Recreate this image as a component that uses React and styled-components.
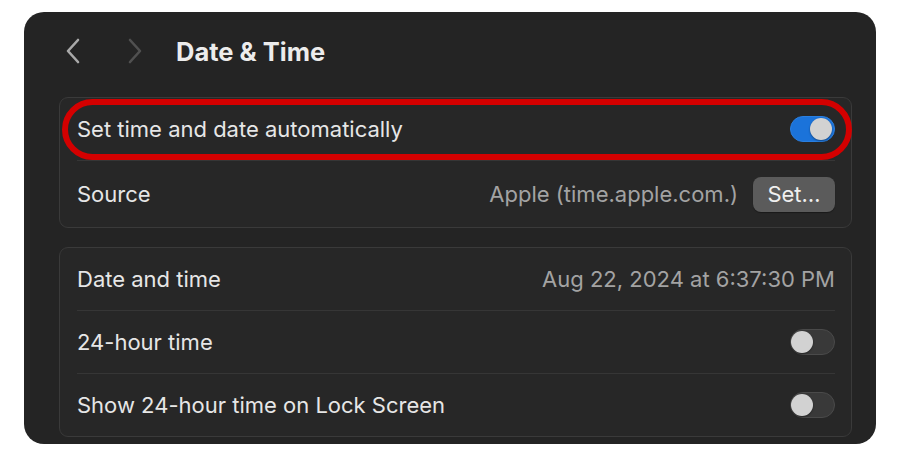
import React from "react";
import styled, { createGlobalStyle } from "styled-components";

const GlobalStyle = createGlobalStyle`
  html, body {
    margin: 0;
    padding: 0;
    background: #ffffff;
  }

  body {
    font-family: Inter, "Noto Sans", "Liberation Sans", sans-serif;
  }
`;

function Chevron({ dir, dim }) {
  return (
    <svg width="16" height="26" viewBox="0 0 16 26" fill="none">
      <path
        d={dir === "left" ? "M13 2 L3 13 L13 24" : "M3 2 L13 13 L3 24"}
        stroke={dim ? "#505050" : "#a9a9a9"}
        strokeWidth="2.6"
        strokeLinecap="round"
        strokeLinejoin="round"
      />
    </svg>
  );
}

function App() {
  return (
    <>
      <GlobalStyle />
      <Page>
        <Window>
          <Header>
            <NavBtn>
              <Chevron dir="left" />
            </NavBtn>
            <NavBtn>
              <Chevron dir="right" dim />
            </NavBtn>
            <Title>Date &amp; Time</Title>
          </Header>

          <Group>
            <Row>
              <Label>Set time and date automatically</Label>
              <Toggle $on />
              <Highlight />
            </Row>
            <Divider />
            <Row $tall>
              <Label>Source</Label>
              <Trailing>
                <Value>Apple (time.apple.com.)</Value>
                <SetBtn>Set…</SetBtn>
              </Trailing>
            </Row>
          </Group>

          <Group>
            <Row>
              <Label>Date and time</Label>
              <Value>Aug 22, 2024 at 6:37:30 PM</Value>
            </Row>
            <Divider />
            <Row>
              <Label>24-hour time</Label>
              <Toggle />
            </Row>
            <Divider />
            <Row>
              <Label>Show 24-hour time on Lock Screen</Label>
              <Toggle />
            </Row>
          </Group>
        </Window>
      </Page>
    </>
  );
}

const Page = styled.div`
  width: 900px;
  height: 456px;
  padding: 12px 24px;
  box-sizing: border-box;
  background: #ffffff;
`;

const Window = styled.div`
  height: 432px;
  box-sizing: border-box;
  background: #242424;
  border-radius: 20px;
  padding: 0 24px 0 35px;
  display: flex;
  flex-direction: column;
  gap: 19px;
  overflow: hidden;
`;

const Header = styled.div`
  display: flex;
  align-items: center;
  height: 66px;
  box-sizing: border-box;
  padding: 12px 0 0 6px;
`;

const NavBtn = styled.div`
  display: flex;
  align-items: center;
  justify-content: center;
  width: 16px;
  height: 26px;
  margin-right: 46px;

  &:nth-child(2) {
    margin-right: 33px;
  }
`;

const Title = styled.h1`
  margin: 0;
  font-size: 25.5px;
  font-weight: 700;
  color: #ececec;
  letter-spacing: 0;
`;

const Group = styled.div`
  display: flex;
  flex-direction: column;
  background: #272727;
  border: 1px solid #3a3a3a;
  border-radius: 9px;
`;

const Row = styled.div`
  position: relative;
  display: flex;
  align-items: center;
  justify-content: space-between;
  min-height: ${({ $tall }) => ($tall ? "66px" : "62px")};
  padding: 0 16px 0 17px;
`;

const Divider = styled.div`
  height: 1px;
  margin: 0 16px 0 17px;
  background: #363636;
`;

const Label = styled.span`
  font-size: 22px;
  color: #e6e6e6;
`;

const Value = styled.span`
  font-size: 22px;
  color: #a3a3a3;
`;

const Trailing = styled.div`
  display: flex;
  align-items: center;
  gap: 15px;
`;

const SetBtn = styled.button`
  height: 35px;
  width: 82px;
  border: 0;
  border-radius: 8px;
  background: #5b5b5b;
  color: #f0f0f0;
  font-family: inherit;
  font-size: 22px;
  padding: 0;
  box-shadow: 0 1px 1px rgba(0, 0, 0, 0.35);
`;

const Toggle = styled.div`
  position: relative;
  width: 45px;
  height: 26px;
  box-sizing: border-box;
  border-radius: 13px;
  background: ${({ $on }) => ($on ? "#1b73da" : "#393939")};
  border: 1px solid ${({ $on }) => ($on ? "#2a7fe0" : "#4a4a4a")};

  &::after {
    content: "";
    position: absolute;
    top: 1px;
    left: ${({ $on }) => ($on ? "19px" : "0px")};
    width: 22px;
    height: 22px;
    border-radius: 50%;
    background: #d2d2d2;
    box-shadow: 0 1px 2px rgba(0, 0, 0, 0.4);
  }
`;

const Highlight = styled.div`
  position: absolute;
  left: 2px;
  right: -1px;
  top: 1px;
  bottom: 0px;
  border: 6px solid #d40000;
  border-radius: 32px;
  pointer-events: none;
`;

export default App;
